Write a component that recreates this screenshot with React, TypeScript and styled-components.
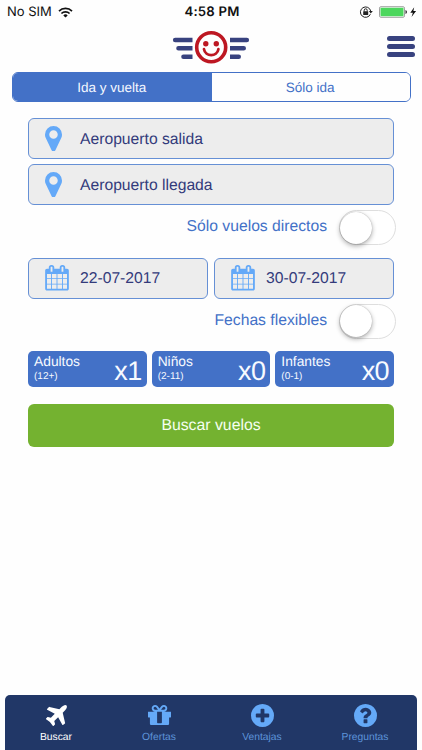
import React from 'react';
import styled, { createGlobalStyle } from 'styled-components';

const GlobalStyle = createGlobalStyle`
  * { box-sizing: border-box; }
  html, body { margin: 0; padding: 0; background: #fefefe; }
  body { font-family: "Liberation Sans", Arial, sans-serif; overflow: hidden; text-rendering: geometricPrecision; }
  svg { display: block; flex: none; }
`;

const blue = '#4371c7';
const ink = '#333b7b';
const sky = '#64a9f8';

const Screen = styled.div`
  width: 422px;
  height: 750px;
  display: flex;
  flex-direction: column;
  background: #fefefe;
`;

const StatusBar = styled.div`
  height: 24px;
  padding: 0 5px 0 7px;
  display: grid;
  grid-template-columns: 1fr auto 1fr;
  align-items: center;
  font-family: Inter, sans-serif;
  font-size: 13px;
  color: #111;
`;

const Carrier = styled.div`
  display: flex;
  align-items: center;
  gap: 6px;
`;

const Clock = styled.div`
  font-weight: 600;
  font-size: 13.2px;
  letter-spacing: 0.2px;
`;

const Indicators = styled.div`
  display: flex;
  align-items: center;
  justify-content: flex-end;
`;

const Header = styled.header`
  height: 48px;
  padding: 6px 7px 0 0;
  display: grid;
  grid-template-columns: 1fr 78px 1fr;
  align-items: start;
`;

const LogoSlot = styled.div`
  grid-column: 2;
  margin-left: 3px;
`;

const MenuButton = styled.div`
  justify-self: end;
  padding-top: 6px;
  display: flex;
  flex-direction: column;
  gap: 3px;
`;

const MenuLine = styled.span`
  width: 28px;
  height: 5px;
  border-radius: 3px;
  background: #38427f;
`;

const Segments = styled.div`
  margin: 0 11px 0 12px;
  height: 30px;
  flex: none;
  display: flex;
  border: 1px solid ${blue};
  border-radius: 6px;
  overflow: hidden;
`;

const Segment = styled.div<{ $active?: boolean }>`
  flex: 1;
  display: flex;
  align-items: center;
  justify-content: center;
  padding-right: 1px;
  font-size: 13.5px;
  background: ${p => (p.$active ? blue : '#fefefe')};
  color: ${p => (p.$active ? '#f5f8ff' : blue)};
`;

const Form = styled.main`
  flex: 1;
  padding: 16px 28px 0;
`;

const Field = styled.div`
  height: 41px;
  flex: 1;
  padding-left: 16px;
  display: flex;
  align-items: center;
  border: 1px solid #6690d5;
  border-radius: 6px;
  background: #ededed;
  color: ${ink};
  font-size: 15.7px;
`;

const FieldIcon = styled.span`
  width: 35px;
  color: ${sky};
`;

const FieldText = styled.span`
  padding-top: 2px;
`;

const Stack = styled.div`
  display: grid;
  gap: 5px;
`;

const Dates = styled.div`
  display: flex;
  gap: 6px;
`;

const ToggleRow = styled.div<{ $height: number }>`
  height: ${p => p.$height}px;
  margin-right: -2px;
  padding-top: 5px;
  display: flex;
  justify-content: flex-end;
  gap: 12px;
  color: ${blue};
  font-size: 15.7px;
  line-height: 33px;
`;

const Switch = styled.span`
  width: 57px;
  height: 35px;
  padding: 0.5px 0;
  border: 1px solid #dedede;
  border-radius: 18px;
  background: #fff;
`;

const Knob = styled.span`
  display: block;
  width: 32px;
  height: 32px;
  border-radius: 50%;
  background: #fff;
  box-shadow: 0 0 1px rgba(0, 0, 0, 0.35), 0 2px 5px rgba(0, 0, 0, 0.33);
`;

const Passengers = styled.div`
  display: grid;
  grid-template-columns: repeat(3, 1fr);
  gap: 5px;
`;

const Passenger = styled.div`
  height: 36px;
  padding: 3px 5px 0 6px;
  display: flex;
  justify-content: space-between;
  border-radius: 5px;
  background: ${blue};
  color: #f7faff;
`;

const PassengerLabel = styled.div`
  font-size: 13.8px;
  line-height: 15px;
`;

const Ages = styled.div`
  font-size: 10px;
  line-height: 16px;
`;

const Count = styled.div`
  font-size: 27px;
  line-height: 35px;
  letter-spacing: -0.6px;
`;

const Submit = styled.div`
  height: 43px;
  margin-top: 17px;
  padding-top: 1px;
  display: flex;
  align-items: center;
  justify-content: center;
  border-radius: 6px;
  background: #74b230;
  color: #f6fff0;
  font-size: 15.8px;
`;

const TabBar = styled.nav`
  height: 55px;
  flex: none;
  margin: 0 5px;
  display: grid;
  grid-template-columns: repeat(4, 1fr);
  border-radius: 5px 5px 0 0;
  background: #213767;
`;

const Tab = styled.div<{ $active?: boolean }>`
  padding: 9px 1px 0 0;
  display: flex;
  flex-direction: column;
  align-items: center;
  gap: 4px;
  font-size: 10.3px;
  line-height: 14px;
  color: ${p => (p.$active ? '#fff' : sky)};
`;

const TabLabel = styled.span<{ $active?: boolean }>`
  color: ${p => (p.$active ? '#fff' : '#5d94da')};
`;

const disc =
  'm320-64q0 209-103 385.500t-279.500 279.500-385.500 103-385.500-103-279.500-279.500-103-385.500 103-385.500 279.500-279.500 385.500-103 385.500 103 279.500 279.500 103 385.500z';

const paths = {
  pin: 'M1152 640q0-106-75-181t-181-75-181 75-75 181 75 181 181 75 181-75 75-181zm256 0q0 109-33 179l-364 774q-16 33-47.500 52t-67.500 19-67.500-19-46.500-52l-365-774q-33-70-33-179 0-212 150-362t362-150 362 150 150 362z',
  calendar:
    'M192 1664h288v-288h-288v288zm352 0h320v-288h-320v288zm-352-352h288v-320h-288v320zm352 0h320v-320h-320v320zm-352-384h288v-288h-288v288zm736 736h320v-288h-320v288zm-384-736h320v-288h-320v288zm768 736h288v-288h-288v288zm-384-352h320v-320h-320v320zm-352-864v-288q0-13-9.500-22.500t-22.500-9.500h-64q-13 0-22.500 9.500t-9.500 22.500v288q0 13 9.500 22.500t22.500 9.500h64q13 0 22.500-9.500t9.500-22.500zm736 864h288v-320h-288v320zm-384-384h320v-288h-320v288zm384 0h288v-288h-288v288zm32-480v-288q0-13-9.500-22.500t-22.500-9.500h-64q-13 0-22.500 9.500t-9.500 22.500v288q0 13 9.500 22.500t22.500 9.500h64q13 0 22.500-9.500t9.500-22.500zm384-64v1280q0 52-38 90t-90 38h-1408q-52 0-90-38t-38-90v-1280q0-52 38-90t90-38h128v-96q0-66 47-113t113-47h64q66 0 113 47t47 113v96h384v-96q0-66 47-113t113-47h64q66 0 113 47t47 113v96h128q52 0 90 38t38 90z',
  plane:
    'M1568 224q44 52 12 148t-108 172l-161 161 160 696q5 19-12 33l-128 96q-7 6-19 6-4 0-7-1-15-3-21-16l-279-508-259 259 53 194q5 17-8 31l-96 96q-9 9-23 9h-2q-15-2-24-13l-189-252-252-189q-11-7-13-23-1-13 9-25l96-97q9-9 23-9 6 0 8 1l194 53 259-259-508-279q-14-8-17-24-2-16 9-27l128-128q14-13 30-8l665 159 160-160q76-76 172-108t148 12z',
  gift: 'M1056 1356v-716h-320v716q0 25 18 38.500t46 13.500h192q28 0 46-13.500t18-38.500zm-456-844h195l-126-161q-26-31-69-31-40 0-68 28t-28 68 28 68 68 28zm688-96q0-40-28-68t-68-28q-43 0-69 31l-125 161h194q40 0 68-28t28-68zm376 256v320q0 14-9 23t-23 9h-96v416q0 40-28 68t-68 28h-1088q-40 0-68-28t-28-68v-416h-96q-14 0-23-9t-9-23v-320q0-14 9-23t23-9h440q-93 0-158.500-65.500t-65.500-158.500 65.500-158.500 158.500-65.500q107 0 168 77l128 165 128-165q61-77 168-77 93 0 158.500 65.500t65.500 158.500-65.500 158.500-158.500 65.500h440q14 0 23 9t9 23z',
  plus:
    'M1344 960v-128q0-26-19-45t-45-19h-256v-256q0-26-19-45t-45-19h-128q-26 0-45 19t-19 45v256h-256q-26 0-45 19t-19 45v128q0 26 19 45t45 19h256v256q0 26 19 45t45 19h128q26 0 45-19t19-45v-256h256q26 0 45-19t19-45z' +
    disc,
  question:
    'M1024 1376v-192q0-14-9-23t-23-9h-192q-14 0-23 9t-9 23v192q0 14 9 23t23 9h192q14 0 23-9t9-23zm256-672q0-88-55.500-163t-138.500-116-170-41q-243 0-371 213-15 24 8 42l132 100q7 6 19 6 16 0 25-12 53-68 86-92 34-24 86-24 48 0 85.500 26t37.500 59q0 38-20 61t-68 45q-63 28-115.500 86.500t-52.500 125.500v36q0 14 9 23t23 9h192q14 0 23-9t9-23q0-19 21.500-49.500t54.500-49.500q32-18 49-28.500t46-35 44.500-48 28-60.500 12.500-81zm384 192q0 209-103 385.500t-279.500 279.500-385.500 103-385.500-103-279.500-279.500-103-385.500 103-385.500 279.500-279.500 385.500-103 385.500 103 279.500 279.500 103 385.500z',
};

const PinIcon = () => (
  <svg width="17" height="25.500" viewBox="384 128 1024 1536" fill="currentColor">
    <path d={paths.pin} />
  </svg>
);

const CalendarIcon = () => (
  <svg width="24" height="25.500" viewBox="64 0 1664 1792" fill="currentColor">
    <path d={paths.calendar} />
  </svg>
);

const TabIcon = ({ d }: { d: string }) => (
  <svg width="23" height="23" viewBox="128 128 1536 1536" overflow="visible" fill="currentColor">
    <path d={d} />
  </svg>
);

const Logo = () => (
  <svg width="78" height="34" viewBox="0 0 78 34">
    <g fill="#38427f">
      <path d="M3.200 7.700H20.500V12.300H3.200a2.300 2.300 0 0 1 0-4.600zM6.500 16H20.500V20.600H6.500a2.300 2.300 0 0 1 0-4.600zM11.500 24.500H20.500V29.100H11.500a2.300 2.300 0 0 1 0-4.600z" />
      <path d="M58 7.700H74.800a2.300 2.300 0 0 1 0 4.600H58zM58 16H71.700a2.300 2.300 0 0 1 0 4.600H58zM58 24.500H66.700a2.300 2.300 0 0 1 0 4.600H58z" />
    </g>
    <circle cx="39.200" cy="17.300" r="14.500" fill="none" stroke="#bd1722" strokeWidth="3.600" />
    <g fill="#bd1722">
      <circle cx="33.800" cy="13.700" r="2.700" />
      <circle cx="44.300" cy="13.700" r="2.700" />
    </g>
    <path d="M32 19.200c1.300 7.800 13.100 7.800 14.400 0" fill="none" stroke="#bd1722" strokeWidth="2.700" strokeLinecap="round" />
  </svg>
);

const WifiIcon = () => (
  <svg width="15" height="11" viewBox="0 0 15 11" fill="none" stroke="#111" strokeWidth="1.700">
    <path d="M1 4.100a9.200 9.200 0 0 1 13 0M3.400 6.500a5.800 5.800 0 0 1 8.200 0" />
    <path d="M7.500 10.600 5.300 8.400a3.100 3.100 0 0 1 4.400 0z" fill="#111" stroke="none" />
  </svg>
);

const StatusIcons = () => (
  <svg width="58" height="14" viewBox="0 0 58 14">
    <path d="M11.400 9.200A5.200 5.200 0 1 1 11.700 6" fill="none" stroke="#222" strokeWidth="1" />
    <path d="M9.800 6h4l-2 2.600z" fill="#222" />
    <rect x="4.200" y="6.300" width="5" height="3.700" rx=".5" fill="#222" />
    <path d="M5.200 6.500V5.300a1.500 1.500 0 0 1 3 0v1.200" fill="none" stroke="#222" strokeWidth="1" />
    <rect x="20.500" y="1.700" width="25" height="10.600" rx="1.500" fill="#fff" stroke="#777" strokeWidth=".7" />
    <rect x="21.500" y="2.700" width="23" height="8.600" rx=".7" fill="#4cd75d" />
    <path d="M46.500 5a2.100 2.100 0 0 1 0 4z" fill="#222" />
    <path d="M55.200 2.200 51.300 7.700h2.600L52.500 12l4.600-5.900h-2.700z" fill="#111" />
  </svg>
);

const passengers = [
  { label: 'Adultos', ages: '(12+)', count: 'x1' },
  { label: 'Niños', ages: '(2-11)', count: 'x0' },
  { label: 'Infantes', ages: '(0-1)', count: 'x0' },
];

const tabs = [
  { label: 'Buscar', d: paths.plane, active: true },
  { label: 'Ofertas', d: paths.gift },
  { label: 'Ventajas', d: paths.plus },
  { label: 'Preguntas', d: paths.question },
];

export default function App() {
  return (
    <Screen>
      <GlobalStyle />
      <StatusBar>
        <Carrier>No SIM <WifiIcon /></Carrier>
        <Clock>4:58 PM</Clock>
        <Indicators><StatusIcons /></Indicators>
      </StatusBar>
      <Header>
        <LogoSlot><Logo /></LogoSlot>
        <MenuButton><MenuLine /><MenuLine /><MenuLine /></MenuButton>
      </Header>
      <Segments>
        <Segment $active>Ida y vuelta</Segment>
        <Segment>Sólo ida</Segment>
      </Segments>
      <Form>
        <Stack>
          <Field><FieldIcon><PinIcon /></FieldIcon><FieldText>Aeropuerto salida</FieldText></Field>
          <Field><FieldIcon><PinIcon /></FieldIcon><FieldText>Aeropuerto llegada</FieldText></Field>
        </Stack>
        <ToggleRow $height={52.5}>
          <span>Sólo vuelos directos</span>
          <Switch><Knob /></Switch>
        </ToggleRow>
        <Dates>
          <Field><FieldIcon><CalendarIcon /></FieldIcon><FieldText>22-07-2017</FieldText></Field>
          <Field><FieldIcon><CalendarIcon /></FieldIcon><FieldText>30-07-2017</FieldText></Field>
        </Dates>
        <ToggleRow $height={52.5}>
          <span>Fechas flexibles</span>
          <Switch><Knob /></Switch>
        </ToggleRow>
        <Passengers>
          {passengers.map(p => (
            <Passenger key={p.label}>
              <PassengerLabel>{p.label}<Ages>{p.ages}</Ages></PassengerLabel>
              <Count>{p.count}</Count>
            </Passenger>
          ))}
        </Passengers>
        <Submit>Buscar vuelos</Submit>
      </Form>
      <TabBar>
        {tabs.map(t => (
          <Tab key={t.label} $active={t.active}>
            <TabIcon d={t.d} />
            <TabLabel $active={t.active}>{t.label}</TabLabel>
          </Tab>
        ))}
      </TabBar>
    </Screen>
  );
}
